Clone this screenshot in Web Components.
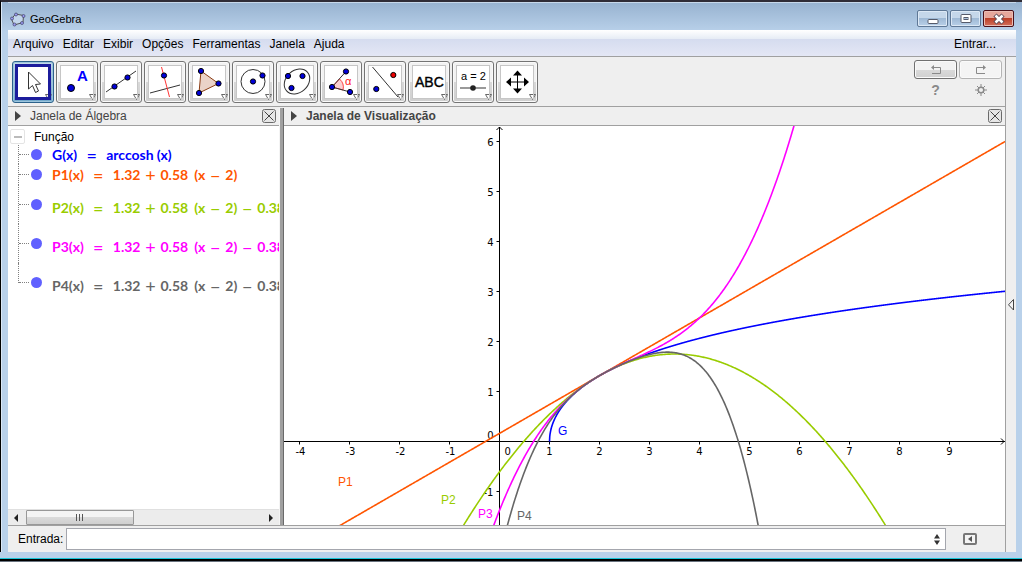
<!DOCTYPE html>
<html lang="pt">
<head>
<meta charset="utf-8">
<title>GeoGebra</title>
<style>
html, body { margin: 0; height: 100%; }
body { font: 12px/16px "Liberation Sans", Arial, sans-serif; color: #000; overflow: hidden; }
</style>
</head>
<body>
<geo-window>
  <title-bar slot="title">GeoGebra</title-bar>
  <menu-bar slot="menu"></menu-bar>
  <tool-bar slot="tools"></tool-bar>
  <dock-panel slot="left" heading="Janela de Álgebra"><algebra-tree></algebra-tree></dock-panel>
  <dock-panel slot="right" heading="Janela de Visualização" active><graph-view></graph-view></dock-panel>
  <input-bar slot="input"></input-bar>
</geo-window>

<script>
const base = `:host,*{box-sizing:border-box} :host{flex-shrink:0} button{font:inherit;color:inherit;margin:0;padding:0;border:0;background:none;display:block} svg{display:block}`;
function define(name, html, setup) {
  customElements.define(name, class extends HTMLElement {
    constructor() {
      super();
      this.attachShadow({ mode: 'open' });
    }
    connectedCallback() {
      const h = typeof html === 'function' ? html(this) : html;
      this.shadowRoot.innerHTML = `<style>${base}</style>${h}`;
      if (setup) setup(this, this.shadowRoot);
    }
  });
}

define('geo-window', `<style>
:host{display:flex;flex-direction:column;height:100vh;background:linear-gradient(#99b4d1 2px,#b9d1ea 30px);border-top:2px solid #2f2c36;border-left:1px solid #000;}
.body{flex:1;min-height:0;display:flex;flex-direction:column;margin:0 6px 0 0;border-left:1px solid #dbe8f6;padding-left:6px}
.row{flex:1;min-height:0;display:flex;background:#efefef}
.main{flex:1;min-width:0;display:flex;flex-direction:column;border-right:1px solid #a0a0a0}
.docks{flex:1;min-height:0;display:grid;grid-template-columns:271px 5px minmax(0,1fr);border-top:1px solid #a0a0a0;border-bottom:1px solid #a0a0a0}
.split{margin-top:1px;background:linear-gradient(90deg,#f4f4f4 0 1px,#a0a0a0 1px 4px,#6a6a6a 4px)}
.gutter{width:10px;display:flex;align-items:center;justify-content:center}
.foot{height:10px;background:linear-gradient(#b9d1ea 0 6px,#19c5d8 6px 7px,#000 7px 9px,#68727e 9px);margin-left:-1px}
</style>
<div class="body"><slot name="title"></slot><slot name="menu"></slot>
<div class="row"><div class="main"><slot name="tools"></slot>
<div class="docks"><slot name="left"></slot><div class="split"></div><slot name="right"></slot></div>
<slot name="input"></slot></div>
<button class="gutter" aria-label="Abrir disposições"><svg width="6" height="12"><path d="M5.5 .5V11L.5 5.800z" fill="#f4f4f4" stroke="#444"/></svg></button></div></div>
<div class="foot"></div>`);

define('title-bar', `<style>
:host{display:flex;height:28px;padding:0 2px;border-top:1px solid #c7d8ea}
.name{flex:1;display:flex;align-items:center;gap:4px;font-size:11px;padding-top:5px}
.btns{display:flex;gap:2px;padding-top:7px}
.btns button{width:31px;height:17px;border:1px solid #5f7896;border-radius:2px;background:linear-gradient(#c5d7ea 50%,#9fb9d5 50%,#b9d0e8);box-shadow:inset 0 0 0 1px #dce8f5;display:flex;align-items:center;justify-content:center}
.btns .x{border-color:#4a1018;background:linear-gradient(#e6a79b 45%,#b83a22 45%,#d4705c);box-shadow:inset 0 0 0 1px #eabdb4}
</style>
<span class="name"><svg width="16" height="15"><path d="M5.500 2 13.500 3.500 13 10.500 4 13 1.500 7z" fill="#c3d6ec" stroke="#555" stroke-width="1"/><g fill="#9a9af0" stroke="#335" stroke-width=".6"><circle cx="6" cy="2.500" r="1.500"/><circle cx="13.500" cy="4" r="1.500"/><circle cx="12" cy="11" r="1.500"/><circle cx="4.500" cy="12.500" r="1.500"/><circle cx="2" cy="6.500" r="1.500"/></g></svg><slot></slot></span>
<span class="btns"><button aria-label="Minimizar"><svg width="12" height="12"><rect x="1" y="6.500" width="10" height="4" rx="1" fill="#fff" stroke="#555a6a"/></svg></button>
<button aria-label="Maximizar"><svg width="12" height="12"><rect x="1" y="1.500" width="10" height="8" rx="1" fill="#fff" stroke="#555a6a"/><rect x="4" y="4.500" width="4" height="2" fill="#a9c1dc" stroke="#555a6a"/></svg></button>
<button class="x" aria-label="Fechar"><svg width="12" height="12"><path d="M2 2 10 10M10 2 2 10" stroke="#5c4a55" stroke-width="4.500"/><path d="M2.500 2.500 9.500 9.500M9.500 2.500 2.500 9.500" stroke="#fff" stroke-width="2.500"/></svg></button></span>`);

define('menu-bar', `<style>
:host{display:flex;justify-content:space-between;height:27px;padding:2px 20px 0 5px;border-bottom:1px solid #a0a0a0;background:linear-gradient(#fff,#e6ecf5 9px,#d5dcef 9px,#e4e7f5 26px)}
nav{display:flex;gap:9px}
button{height:24px}
</style><nav>${['Arquivo','Editar','Exibir','Opções','Ferramentas','Janela','Ajuda'].map(t => `<button>${t}</button>`).join('')}</nav><button>Entrar...</button>`);

const dot = (x, y, r = 2.6, c = '#0000d8') => `<circle cx="${x}" cy="${y}" r="${r}" fill="${c}" stroke="#000"/>`;
const line = (x1, y1, x2, y2, c = '#333') => `<path d="M${x1} ${y1} ${x2} ${y2}" stroke="${c}" fill="none"/>`;
const tools = [
  ['Mover', `<path d="M11.500 6v17l4-3.500 3 7 3-1.500-3-6.500 5-.5z" fill="#fff" stroke="#333"/>`],
  ['Ponto', dot(10, 22, 3.5) + `<text x="16" y="15" font-size="15" font-weight="bold" fill="#00f">A</text>`],
  ['Reta', line(1, 26, 31, 5) + dot(9.5, 20.5) + dot(22.5, 11.5)],
  ['Perpendicular', line(1, 27, 31, 19) + line(12.5, 1, 20.5, 31, '#f33') + dot(15, 9.5)],
  ['Polígono', `<path d="M8 5 25.500 17.500 6 27z" fill="#ead3c8" stroke="#8a3c14"/>` + dot(8, 5) + dot(25.5, 17.5) + dot(6, 27)],
  ['Círculo', `<circle cx="16" cy="15.500" r="12" fill="none" stroke="#333"/>` + dot(16, 15.5) + dot(25.5, 9.5)],
  ['Elipse', `<ellipse cx="16" cy="15.500" rx="14" ry="11" transform="rotate(-42 16 15.5)" fill="none" stroke="#333"/>` + dot(7, 10) + dot(21.5, 10) + dot(10.5, 22)],
  ['Ângulo', `<path d="M7 21 14.500 13A11 11 0 0 1 18 24z" fill="#fbd0d0" stroke="#f44"/>` + line(7, 21, 21, 5.5) + line(7, 21, 25, 26) + dot(7, 21) + dot(21, 5.5) + dot(25, 26) + `<text x="20" y="19" font-size="11" fill="#f22">α</text>`],
  ['Reflexão', line(3.5, 1, 29, 31) + dot(24.3, 9, 2.6, '#e00') + dot(7.3, 23)],
  ['Texto', `<text x="2" y="21" font-size="14" stroke="#000" stroke-width=".4">ABC</text>`],
  ['Controle deslizante', `<text x="4" y="14" font-size="11">a = 2</text><path d="M3 22H29" stroke="#777" stroke-width="1.500"/><circle cx="16" cy="22" r="2.800" fill="#222"/>`],
  ['Mover janela', `<path d="M16.500 6V26M6 16H27" stroke="#000"/><path d="M16.500 4.500 12 9.500h9zM16.500 27.500 12 22.500h9zM5 16 10 11.500v9zM28 16 23 11.500v9z"/>`]
];
define('tool-button', el => `<style>
:host{display:block}
button{width:42px;height:42px;border:1px solid #747474;border-radius:3px;box-shadow:inset 0 0 0 1px #fafafa;background:linear-gradient(#f2f2f2 50%,#d9d9d9 50%,#cfcfcf);display:flex;align-items:center;justify-content:center}
:host([pressed]) button{border-color:#2c628b;background:linear-gradient(#c4dbe9,#6fa6c8);box-shadow:inset 0 0 0 1px #9cc4dc}
svg{overflow:visible;background:#fff;outline:1px solid #c6c6c6}
:host([pressed]) svg{outline:3px solid #1c1c9c;outline-offset:-1px}
</style><button aria-label="${tools[el.getAttribute('n')][0]}"><svg width="32" height="32">${tools[el.getAttribute('n')][1]}<path d="M28.500 28.500h6l-3 5z" fill="#fff" stroke="#666"/></svg></button>`);

define('tool-bar', `<style>
:host{display:flex;justify-content:space-between;height:49px;padding:4px 3px 0 4px}
.tools{display:flex;gap:2px}
.side{display:grid;grid-template-columns:43px 43px;grid-template-rows:19px 22px;gap:0 2px;margin-top:-1px}
.side button{display:flex;align-items:center;justify-content:center;color:#8a8a8a}
.box{border:1px solid #707070;border-radius:3px;box-shadow:inset 0 0 0 1px #fafafa;background:linear-gradient(#f2f2f2 50%,#dadada 50%,#d0d0d0)}
.box.off{border-color:#b4b4b4;background:#f4f4f4}
.help{font-weight:bold;font-size:14px}
</style><div class="tools">${tools.map((t, i) => `<tool-button n="${i}"${i ? '' : ' pressed'}></tool-button>`).join('')}</div>
<div class="side"><button class="box" aria-label="Desfazer"><svg width="12" height="10" fill="none" stroke="#8a8a8a"><path d="M2 2.500H10.500V8.500H2"/><path d="M4 0v5L1 2.500z" fill="#8a8a8a" stroke="none"/></svg></button>
<button class="box off" aria-label="Refazer"><svg width="12" height="10" fill="none" stroke="#8a8a8a"><path d="M9 2.500H1.500V8.500H10"/><path d="M8 0v5L11 2.500z" fill="#8a8a8a" stroke="none"/></svg></button>
<button class="help">?</button>
<button aria-label="Configurações"><svg width="12" height="12" stroke="#8a8a8a" fill="none"><circle cx="6" cy="6" r="2.800" stroke-width="1.500"/><path d="M6 0V3M6 9v3M0 6H3M9 6h3M2 2l2 2M8 8l2 2M10 2 8 4M4 8l-2 2"/></svg></button></div>`);

define('dock-panel', el => `<style>
:host{display:flex;flex-direction:column;min-width:0;min-height:0}
header{height:19px;display:flex;align-items:center;gap:9px;padding:0 3px 0 7px;border-bottom:1px solid #a0a0a0;color:#444;background:#efefef}
h2{flex:1;margin:0;font:inherit}
:host([active]) h2{font-weight:bold}
.body{flex:1;min-height:0;display:flex;background:#fff}
::slotted(*){flex:1;min-width:0}
</style><header><svg width="6" height="10"><path d="M0 0 6 5 0 10z" fill="#444"/></svg><h2>${el.getAttribute('heading')}</h2>
<button aria-label="Fechar painel"><svg width="14" height="14"><rect x=".5" y=".5" width="13" height="13" rx="2" fill="#e6e6e6" stroke="#6a6a6a"/><path d="M2.500 2.500l9 9M11.500 2.500l-9 9" stroke="#444"/></svg></button></header><div class="body"><slot></slot></div>`);

const p = (n, tail = '') => `P${n}(x)<i>=</i>1.32<b>+</b>0.58<u></u>(x<b>−</b>2)${tail}`;
const more = '<b>−</b>0.38';
const rows = [['#0000ff', 'G(x)<i>=</i>arccosh<s></s>(x)', 'g'], ['#ff5500', p(1), ''], ['#99cc00', p(2, more), 'tall'], ['#ff00ff', p(3, more), 'tall'], ['#666666', p(4, more), 'tall last']];
define('algebra-tree', `<style>
:host{display:flex;flex-direction:column;overflow:hidden}
.tree{flex:1;min-height:0;overflow:hidden}
.root{height:19px;display:flex;align-items:center;gap:9px;padding:2px 0 0 2px}
.root button{width:15px;height:15px;border:1px solid #e4e4e4;border-radius:2px;display:flex;align-items:center;justify-content:center}
ul{list-style:none;margin:0;padding:0 0 0 10px;overflow:hidden}
li{height:21px;display:flex;align-items:center;white-space:nowrap}
li>*,.f>*{flex-shrink:0}
li.g{height:19px} li.tall{height:39px}
.branch{width:11px;align-self:stretch;border-left:1px dotted #808080;display:flex;align-items:center}
.branch::after{content:"";flex:1;border-top:1px dotted #808080}
.last .branch{align-self:flex-start;height:20px;align-items:flex-end}
.dot{width:11px;height:11px;border-radius:50%;background:#6060ff;margin:0 10px 0 2px}
.f{display:flex;font:bold 14px/18px Lato,"Open Sans",sans-serif}
.tall .f{padding-top:6px}
.f i,.f b{font-style:normal;font-weight:400;font-size:18px;text-align:center;width:20px}
.f i{width:29px}
.f u{width:6px}.f s{width:3px}
.scroll{height:16px;display:flex;align-items:center;padding:0 6px;background:#ececec;border-top:1px solid #e0e0e0}
.track{flex:1;margin:0 8px}
.thumb{width:108px;height:15px;border:1px solid #989898;border-radius:1px;background:linear-gradient(#f4f4f4 50%,#dadada 50%,#cfcfcf);display:flex;align-items:center;justify-content:center}
</style><div class="tree"><div class="root"><button aria-label="Recolher"><svg width="8" height="2"><path d="M0 1H8" stroke="#bbb" stroke-width="2"/></svg></button><span>Função</span></div>
<ul>${rows.map(r => `<li class="${r[2]}"><span class="branch"></span><span class="dot"></span><span class="f" style="color:${r[0]}">${r[1]}</span></li>`).join('')}</ul></div>
<div class="scroll"><svg width="4" height="8"><path d="M4 0v8L0 4z" fill="#222"/></svg><div class="track"><div class="thumb"><svg width="8" height="7"><path d="M.500 0V7M3.500 0V7M6.500 0V7" stroke="#555"/></svg></div></div><svg width="4" height="8"><path d="M0 0v8L4 4z" fill="#222"/></svg></div>`);

define('graph-view', `<style>
:host{display:block;overflow:hidden;background:#fff}
svg{width:100%;height:100%;overflow:hidden}
.axis{font-family:"DejaVu Sans",sans-serif}
</style><svg role="img" aria-label="Gráfico"></svg>`, (el, root) => {
  const svg = root.querySelector('svg');
  const ox = 215.5, oy = 315.5, unit = 50;
  const num = (s, x, y, anchor) => `<text class="axis" x="${x}" y="${y}" font-size="10" text-anchor="${anchor}">${s}</text>`;
  const label = (s, x, y, color) => `<text x="${x}" y="${y}" font-size="12" fill="${color}">${s}</text>`;
  const taylor = n => x => [1.316958, 0.57735, -0.19245, 0.096225, -0.058804].slice(0, n + 1).reduce((a, c, k) => a + c * (x - 2) ** k, 0);
  const draw = () => {
    const W = el.clientWidth, H = el.clientHeight;
    const curve = (f, color, from, step = 1) => {
      let d = '';
      for (let px = from; px <= W; px += step) {
        const y = oy - unit * f((px - ox) / unit);
        if (y > -400 && y < H + 400) d += (d ? 'L' : 'M') + px + ' ' + y.toFixed(2);
      }
      return `<path d="${d}" fill="none" stroke="${color}" stroke-width="1.600"/>`;
    };
    let s = '', ticks = '';
    const first = Math.ceil(-ox / unit), last = Math.floor((W - ox - 20) / unit);
    for (let i = first; i <= last; i++) {
      if (!i) continue;
      ticks += `M${ox + i * unit} ${oy}v3`;
      s += num(i, ox + i * unit + (i < 0 ? 1 : 0), oy + 13, 'middle');
    }
    for (let j = Math.ceil((oy - H + 6) / unit); j <= Math.floor(oy / unit); j++) {
      if (!j) continue;
      ticks += `M${ox} ${oy - j * unit}h-3`;
      s += num(j, ox - 6, oy - j * unit + 4, 'end');
    }
    s += num(0, ox + 5, oy + 13, 'start') + num(0, ox - 6, oy - 3, 'end');
    s += `<path d="M0 ${oy}H${W}M${ox} 1V${H}${ticks}M${ox - 3} 4l3-3 3 3M${W - 4} ${oy - 3}l3 3-3 3" fill="none" stroke="#000"/>`;
    s += curve(x => Math.acosh(Math.max(1, x)), '#0000ff', ox + unit, 0.25);
    s += curve(taylor(1), '#ff5500', 0) + curve(taylor(2), '#99cc00', 0) + curve(taylor(3), '#ff00ff', 0) + curve(taylor(4), '#666666', 0);
    s += label('G', 274, 309, '#00f') + label('P1', 54, 360, '#f50') + label('P2', 157, 378, '#9c0') + label('P3', 194, 392, '#f0f') + label('P4', 233, 394, '#666');
    svg.innerHTML = s;
  };
  draw();
  new ResizeObserver(draw).observe(el);
});

define('input-bar', `<style>
:host{display:flex;align-items:center;height:26px;padding:0 28px 0 10px;background:#efefef}
.field{flex:1;display:flex;align-items:center;height:22px;margin:0 17px 0 3px;padding-right:5px;border:1px solid #a4a6ad;background:#fff}
input{flex:1;min-width:0;height:18px;border:0;padding:0 2px;font:inherit;outline:0;background:none}
</style><label for="cmd">Entrada:</label><div class="field"><input id="cmd" type="text"><svg width="6" height="11"><path d="M3 0 6 4.500H0zM3 11 6 6.500H0z" fill="#333"/></svg></div>
<button aria-label="Ajuda de entrada"><svg width="14" height="12"><rect x="1" y="1" width="12" height="10" rx="1" fill="#f4f4f4" stroke="#777" stroke-width="2"/><path d="M9 3v6L5 6z" fill="#555"/></svg></button>`);
</script>
</body>
</html>
